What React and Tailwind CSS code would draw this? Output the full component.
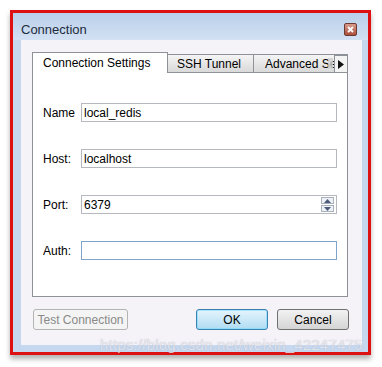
import React from "react";

const font = { fontFamily: '"Liberation Sans", Arial, sans-serif' };

function Field({ label, value, spinner, focused }) {
  return (
    <div className="flex items-center h-[19px]">
      <div className="w-[38px] text-[12px] text-black">{label}</div>
      <div
        className={
          "relative flex-1 h-[19px] bg-white border flex items-center pl-[2px] text-[12px] text-black " +
          (focused ? "border-[#7fa4cc]" : "border-[#b5b9bf]")
        }
      >
        {value}
        {spinner && (
          <div className="absolute right-[2px] top-[1px] flex flex-col gap-[1px]">
            <div className="w-[13px] h-[7px] border border-[#a9b1bd] bg-[#eef1f6] flex items-center justify-center">
              <svg width="7" height="4" viewBox="0 0 7 4"><path d="M0 4 L3.5 0 L7 4 Z" fill="#4a5a78" /></svg>
            </div>
            <div className="w-[13px] h-[7px] border border-[#a9b1bd] bg-[#eef1f6] flex items-center justify-center">
              <svg width="7" height="4" viewBox="0 0 7 4"><path d="M0 0 L3.5 4 L7 0 Z" fill="#4a5a78" /></svg>
            </div>
          </div>
        )}
      </div>
    </div>
  );
}

export default function App() {
  return (
    <div className="w-[382px] h-[367px] bg-white pt-[10px] pl-[10px] relative" style={font}>
      <div className="w-[361px] h-[345px] border-[3px] border-[#dd1111] bg-[#c5d8f0] flex flex-col shadow-[0_4px_5px_rgba(0,0,0,0.3)]">
        {/* title bar */}
        <div className="h-[27px] flex items-center justify-between pl-[8px] pr-[11px] bg-gradient-to-b from-[#b9cfea] to-[#d3e1f3]">
          <span className="text-[13px] text-[#1e2b3c] mt-[6px]">Connection</span>
          <div className="w-[13px] h-[13px] mt-[6px] rounded-[2px] border border-[#6b3a32] bg-gradient-to-b from-[#d99a8a] to-[#a94f3c] flex items-center justify-center">
            <svg width="7" height="7" viewBox="0 0 7 7"><path d="M1 1 L6 6 M6 1 L1 6" stroke="white" strokeWidth="1.8" /></svg>
          </div>
        </div>
        {/* client */}
        <div className="flex-1 ml-[8px] mr-[6px] mb-[7px] bg-[#f5f3f7] pt-[11px] pl-[11px] pr-[14px] flex flex-col">
          {/* tabs */}
          <div className="flex items-end h-[21px]">
            <div className="w-[136px] h-[21px] border border-b-0 border-[#8e9198] bg-white flex items-center pl-[10px] text-[12px] text-black relative z-10 -mb-px">
              Connection Settings
            </div>
            <div className="w-[86px] h-[18px] border border-l-0 border-b-0 border-[#8e9198] bg-gradient-to-b from-[#f4f4f4] to-[#d9d9d9] flex items-center pl-[9px] text-[12px] text-black">
              SSH Tunnel
            </div>
            <div className="flex-1 h-[18px] border border-l-0 border-b-0 border-r-0 border-[#8e9198] bg-gradient-to-b from-[#f4f4f4] to-[#d9d9d9] flex items-center pl-[11px] text-[12px] text-black overflow-hidden whitespace-nowrap relative">
              Advanced Setti
              <div className="absolute right-0 top-0 w-[14px] h-[18px] border border-[#8e9198] bg-[#f3f3f3] flex items-center justify-center">
                <svg width="6" height="9" viewBox="0 0 6 9"><path d="M0 0 L6 4.5 L0 9 Z" fill="#111" /></svg>
              </div>
              <div className="absolute right-[15px] top-[3px] w-[5px] h-[11px] bg-[#d0d0d0] opacity-80" />
            </div>
          </div>
          {/* panel */}
          <div className="h-[225px] border border-[#8e9198] bg-white pt-[30px] pl-[10px] pr-[10px] flex flex-col gap-[27px]">
            <Field label="Name" value="local_redis" />
            <Field label="Host:" value="localhost" />
            <Field label="Port:" value="6379" spinner />
            <Field label="Auth:" value="" focused />
          </div>
          {/* buttons */}
          <div className="flex items-center mt-[12px] pl-[1px]">
            <div className="w-[95px] h-[21px] border border-[#b4b4b4] rounded-[3px] bg-[#f4f4f4] flex items-center justify-center text-[12px] text-[#8a8a8a]">
              Test Connection
            </div>
            <div className="ml-auto w-[72px] h-[21px] border border-[#3c7fb1] rounded-[3px] bg-gradient-to-b from-[#e5f4fc] to-[#b0dcf3] flex items-center justify-center text-[12px] text-black shadow-[inset_0_0_0_1px_rgba(120,220,255,0.6)]">
              OK
            </div>
            <div className="ml-[9px] mr-[-1px] w-[72px] h-[21px] border border-[#707070] rounded-[3px] bg-gradient-to-b from-[#f2f2f2] to-[#d5d5d5] flex items-center justify-center text-[12px] text-black">
              Cancel
            </div>
          </div>
        </div>
      </div>
      <div className="absolute left-[100px] top-[334px] text-[15px] text-[#e6e6ee] opacity-80 whitespace-nowrap tracking-[0.2px]" style={{ textShadow: "0 0 1px rgba(140,140,160,0.7)" }}>
        https://blog.csdn.net/weixin_42247475
      </div>
    </div>
  );
}
